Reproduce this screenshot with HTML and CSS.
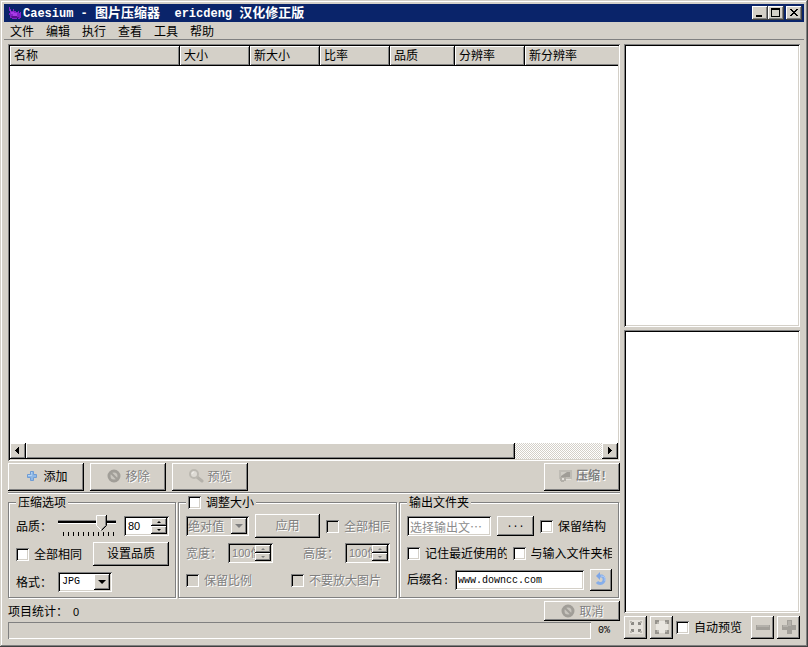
FILE: index.html
```html
<!DOCTYPE html>
<html lang="zh-CN">
<head>
<meta charset="utf-8">
<title>Caesium - 图片压缩器</title>
<link rel="stylesheet" href="styles.css">
</head>
<body>
<div class="window">
  <header class="titlebar">
    <svg class="logo" viewBox="0 0 14 14" aria-hidden="true"><path fill="#8420c8" d="M1 1h1v2h1v2h2V3h1v2h2v1h2V5h1v2h1V6h1v6h-1v1h-2v-1H9v1H4v-1H2V9H1V7h1V5H1z"/><path fill="#a63ce6" d="M2 4h1v2h3v1h3v3H5V8H3z"/><path fill="#5a1090" d="M3 10h6v1h2v1H4z"/></svg>
    <h1><span class="latin">Caesium - </span>图片压缩器<span class="latin">  ericdeng </span>汉化修正版</h1>
    <div class="caption-buttons">
      <button type="button" aria-label="最小化"><svg viewBox="0 0 16 14"><path d="M4 9h6v2H4z"/></svg></button>
      <button type="button" aria-label="最大化"><svg viewBox="0 0 16 14"><path fill-rule="evenodd" d="M3 2h9v9H3zM4 4v6h7V4z"/></svg></button>
      <button type="button" class="close" aria-label="关闭"><svg viewBox="0 0 16 14"><path d="M4 3h2v1h1v1h2V4h1V3h2v1h-1v1h-1v1H9v1h1v1h1v1h1v1h-2V9H9V8H7v1H6v1H4V9h1V8h1V7h1V6H6V5H5V4H4z"/></svg></button>
    </div>
  </header>

  <nav class="menubar">
    <button type="button">文件</button>
    <button type="button">编辑</button>
    <button type="button">执行</button>
    <button type="button">查看</button>
    <button type="button">工具</button>
    <button type="button">帮助</button>
  </nav>

  <main class="content">
    <section class="left">
      <div class="list sunken">
        <div class="list-view">
          <table>
            <colgroup><col class="c170"><col class="c70"><col class="c70"><col class="c70"><col class="c65"><col class="c70"><col></colgroup>
            <thead><tr><th>名称</th><th>大小</th><th>新大小</th><th>比率</th><th>品质</th><th>分辨率</th><th>新分辨率</th></tr></thead>
          </table>
        </div>
        <div class="scrollbar">
          <button type="button" class="raised" aria-label="向左滚动"><svg viewBox="0 0 16 16"><path d="M9 4v7H8v-1H7V9H6V8H5V7h1V6h1V5h1V4z"/></svg></button>
          <div class="scroll-thumb raised"></div>
          <div class="scroll-track"></div>
          <button type="button" class="raised" aria-label="向右滚动"><svg viewBox="0 0 16 16"><path d="M6 4v7h1v-1h1V9h1V8h1V7H9V6H8V5H7V4z"/></svg></button>
        </div>
      </div>

      <div class="actions">
        <button type="button" class="btn raised"><svg class="icon" viewBox="0 0 16 16"><path fill="#8fb8e6" stroke="#6f9cd4" d="M6.500 3.500h3v3h3v3h-3v3h-3v-3h-3v-3h3z"/><path fill="#b8d4f2" d="M7 4h1v3H4v1h4z"/></svg>添加</button>
        <button type="button" class="btn raised" disabled><svg class="icon" viewBox="0 0 16 16"><circle cx="8" cy="8" r="5" fill="#c8c5be" stroke="#a19e98" stroke-width="3"/><path stroke="#a19e98" stroke-width="2" d="M4 4l8 8"/></svg>移除</button>
        <button type="button" class="btn raised" disabled><svg class="icon" viewBox="0 0 16 16"><path stroke="#b4b1aa" stroke-width="3" stroke-linecap="round" d="M9 9l5 4"/><circle cx="6" cy="6" r="4" fill="#dedbd5" stroke="#bbb8b1" stroke-width="2"/><path stroke="#f2f0ec" fill="none" d="M4 6q0-2 2-2"/></svg>预览</button>
        <button type="button" class="btn raised compress" disabled><svg class="icon" viewBox="0 0 16 16"><path fill="#bfbcb5" d="M2 2h13v9H2z"/><path fill="#a09d97" d="M4 4h9v5H4z"/><path fill="#d0cdc6" d="M4 4h6L4 8z"/><path fill="#b2afa8" d="M3 9h6v4H7v1H4v-1H3z"/><path fill="#e4e1dc" d="M9 11h5v1H9zM5 10h2v2H5z"/></svg><span>压缩<span class="latin">!</span></span></button>
      </div>

      <hr>

      <form class="groups">
        <fieldset class="compression">
          <legend>压缩选项</legend>
          <div class="row">
            <label for="quality">品质<span class="colon">：</span></label>
            <div class="slider">
              <input type="range" id="quality" min="0" max="100" value="80">
              <div class="ticks"></div>
            </div>
            <div class="spin sunken push">
              <input type="text" value="80" aria-label="品质数值">
              <div class="steps"><button type="button" class="raised" aria-label="增加"><i class="up"></i></button><button type="button" class="raised" aria-label="减少"><i class="down"></i></button></div>
            </div>
          </div>
          <div class="row">
            <label class="check"><input type="checkbox"><span>全部相同</span></label>
            <button type="button" class="btn raised push">设置品质</button>
          </div>
          <div class="row">
            <label for="format">格式<span class="colon">：</span></label>
            <div class="combo sunken">
              <select id="format"><option>JPG</option><option>PNG</option><option>BMP</option></select>
              <span class="arrow raised"><i class="down"></i></span>
            </div>
          </div>
        </fieldset>

        <fieldset class="resize">
          <legend><label class="check"><input type="checkbox"><span>调整大小</span></label></legend>
          <div class="row">
            <div class="combo sunken off">
              <select disabled aria-label="调整方式"><option>绝对值</option></select>
              <span class="arrow raised"><i class="down"></i></span>
            </div>
            <button type="button" class="btn raised" disabled>应用</button>
            <label class="check off"><input type="checkbox" disabled><span>全部相同</span></label>
          </div>
          <div class="row split">
            <div class="field off">
              <label for="w">宽度<span class="colon">：</span></label>
              <div class="spin sunken">
                <input type="text" id="w" value="100像素" disabled>
                <div class="steps"><button type="button" class="raised" disabled aria-label="增加"><i class="up"></i></button><button type="button" class="raised" disabled aria-label="减少"><i class="down"></i></button></div>
              </div>
            </div>
            <div class="field off">
              <label for="h">高度<span class="colon">：</span></label>
              <div class="spin sunken">
                <input type="text" id="h" value="100像素" disabled>
                <div class="steps"><button type="button" class="raised" disabled aria-label="增加"><i class="up"></i></button><button type="button" class="raised" disabled aria-label="减少"><i class="down"></i></button></div>
              </div>
            </div>
          </div>
          <div class="row ratio">
            <label class="check off"><input type="checkbox" disabled><span>保留比例</span></label>
            <label class="check off"><input type="checkbox" disabled><span>不要放大图片</span></label>
          </div>
        </fieldset>

        <fieldset class="output">
          <legend>输出文件夹</legend>
          <div class="row">
            <input type="text" class="text sunken folder" placeholder="选择输出文…" aria-label="输出文件夹">
            <button type="button" class="btn raised browse">...</button>
            <label class="check"><input type="checkbox"><span>保留结构</span></label>
          </div>
          <div class="row halves">
            <label class="check"><input type="checkbox"><span>记住最近使用的文件夹</span></label>
            <label class="check"><input type="checkbox"><span>与输入文件夹相同</span></label>
          </div>
          <div class="row">
            <label for="suffix">后缀名<span class="latin">:</span></label>
            <input type="text" id="suffix" class="text sunken suffix" value="www.downcc.com">
            <button type="button" class="btn raised undo" aria-label="重置"><svg class="icon" viewBox="0 0 16 16"><path fill="none" stroke="#86aeea" stroke-width="3" d="M7 5h2a4 4 0 1 1-5 6"/><path fill="#7ea6e6" d="M7 1v8L3 5z"/><path stroke="#b4cdf5" fill="none" d="M8 5q5 0 4 5"/></svg></button>
          </div>
        </fieldset>
      </form>

      <div class="status">
        <span>项目统计<span class="colon">：</span><span class="digits count">0</span></span>
        <button type="button" class="btn raised" disabled><svg class="icon" viewBox="0 0 16 16"><circle cx="8" cy="8" r="5" fill="#c8c5be" stroke="#a19e98" stroke-width="3"/><path stroke="#a19e98" stroke-width="2" d="M4 4l8 8"/></svg>取消</button>
      </div>
      <div class="progress-row">
        <div class="progress" role="progressbar" aria-valuenow="0"></div>
        <span class="latin">0%</span>
      </div>
    </section>

    <aside class="right">
      <div class="preview sunken"></div>
      <div class="preview sunken"></div>
      <div class="tools">
        <button type="button" class="btn raised" disabled aria-label="适应窗口"><svg class="icon" viewBox="0 0 16 16"><path fill="#e6e3dd" d="M1 1h14v14H1z"/><path fill="#8b8984" d="M3 3h3v3H3zM10 3h3v3h-3zM3 10h3v3H3zM10 10h3v3h-3z"/><path fill="#b9b6af" d="M2 2h2v2H2zM12 2h2v2h-2zM2 12h2v2H2zM12 12h2v2h-2z"/></svg></button>
        <button type="button" class="btn raised" disabled aria-label="实际大小"><svg class="icon" viewBox="0 0 16 16"><path fill="#e9e6e0" d="M2 2h12v12H2z"/><path fill="#96938d" d="M1 1h4v2H3v2H1zM11 1h4v4h-2V3h-2zM1 11h2v2h2v2H1zM13 11h2v4h-4v-2h2z"/><path fill="#b9b6af" d="M3 3h2v2H3zM11 3h2v2h-2zM3 11h2v2H3zM11 11h2v2h-2z"/></svg></button>
        <label class="check"><input type="checkbox"><span>自动预览</span></label>
        <button type="button" class="btn raised push" disabled aria-label="缩小"><svg class="icon" viewBox="0 0 16 16"><path fill="#a3a09a" d="M1 6h14v5H1z"/><path fill="#b4b1ab" d="M2 6h12v2H2z"/></svg></button>
        <button type="button" class="btn raised" disabled aria-label="放大"><svg class="icon" viewBox="0 0 16 16"><path fill="#a3a09a" d="M6 1h5v5h4v5h-4v4H6v-4H1V6h5z"/><path fill="#b4b1ab" d="M7 2h3v5H7zM2 6h5v2H2z"/></svg></button>
      </div>
    </aside>
  </main>
</div>
</body>
</html>
```
FILE: styles.css
```css
:root {
  --face: #d4d0c8;
  --gray: #808080;
  --navy: #0a246a;
}

* { box-sizing: border-box; }

body {
  margin: 0;
  font: 12px/14px "Noto Sans CJK SC", "Liberation Sans", sans-serif;
  color: #000;
  background: var(--face);
}

button, input, select {
  margin: 0;
  padding: 0;
  border: 0;
  border-radius: 0;
  font: inherit;
  color: inherit;
  background: none;
  appearance: none;
  outline: none;
}

.latin {
  font-family: "Liberation Mono", monospace;
  font-size: 10px;
  white-space: pre;
}

.digits {
  font-family: "Liberation Sans", sans-serif;
  font-size: 11px;
}

/* The Traditional Chinese face centres the full-width colon */
.colon { font-family: "Noto Sans CJK TC", sans-serif; }

.raised {
  background: var(--face);
  box-shadow: inset -1px -1px #000, inset 1px 1px #fff, inset -2px -2px var(--gray);
}

.sunken {
  background: #fff;
  box-shadow: inset 1px 1px var(--gray), inset -1px -1px #fff, inset 2px 2px #000, inset -2px -2px var(--face);
}

.window {
  display: flex;
  flex-direction: column;
  min-height: 100vh;
  padding: 4px;
  background: var(--face);
  box-shadow: inset -1px -1px #404040, inset 1px 1px var(--face), inset -2px -2px var(--gray), inset 2px 2px #fff;
}

/* Title bar */
.titlebar {
  display: flex;
  align-items: center;
  height: 18px;
  padding: 0 2px 0 4px;
  background: var(--navy);
  color: #fff;
}

.logo { width: 14px; height: 14px; margin-right: 1px; }

h1 {
  flex: 1;
  margin: 0;
  font-size: 13px;
  line-height: 18px;
  font-weight: bold;
  white-space: nowrap;
}

h1 .latin { font-size: 12px; }

.caption-buttons { display: flex; }

.caption-buttons button {
  width: 16px;
  height: 14px;
  background: var(--face);
  box-shadow: inset -1px -1px #404040, inset 1px 1px #fff, inset -2px -2px var(--gray);
}

.caption-buttons .close { margin-left: 2px; }
.caption-buttons svg { display: block; width: 16px; height: 14px; }

/* Menu */
.menubar {
  display: flex;
  gap: 12px;
  height: 18px;
  padding: 0 6px;
  border-bottom: 1px solid var(--gray);
}

.content {
  flex: 1;
  display: grid;
  grid-template-columns: minmax(0, 1fr) 176px;
  gap: 4px;
  padding: 4px;
}

.left { display: flex; flex-direction: column; }

/* File list */
.list {
  flex: 1;
  display: flex;
  flex-direction: column;
  padding: 2px;
}

.list-view { flex: 1; overflow: hidden; }

table {
  width: 100%;
  table-layout: fixed;
  border-collapse: separate;
  border-spacing: 0;
}

.c170 { width: 170px; }
.c70 { width: 70px; }
.c65 { width: 65px; }

th {
  height: 20px;
  padding: 0 4px 2px;
  text-align: left;
  font-weight: normal;
  background: var(--face);
  box-shadow: inset -1px -1px #000, inset 1px 1px #fff, inset -2px -2px var(--gray);
}

th:last-child {
  box-shadow: inset 0 -1px #000, inset 1px 1px #fff, inset 0 -2px var(--gray);
}

.scrollbar { display: flex; height: 16px; }
.scrollbar button { width: 16px; }
.scrollbar svg { display: block; width: 16px; height: 16px; }
.scroll-thumb { flex: 489; }

.scroll-track {
  flex: 87;
  background: repeating-conic-gradient(#fff 0 25%, var(--face) 0 50%) 0 0 / 2px 2px;
}

/* Buttons */
.btn {
  display: inline-flex;
  align-items: center;
  justify-content: center;
  gap: 3px;
  width: 76px;
  height: 24px;
  padding-bottom: 2px;
  white-space: nowrap;
}

.icon { width: 16px; height: 16px; flex: none; }

.btn:disabled, .off {
  color: var(--gray);
  text-shadow: 1px 1px #fff;
}

.push { margin-left: auto; }

.actions { display: flex; gap: 6px; margin-top: 2px; }
.actions .btn { height: 28px; }

.compress { margin-left: auto; font-weight: bold; }
.compress .latin { font-size: 12px; }

hr {
  width: 100%;
  height: 2px;
  margin: 1px 0;
  border: 0;
  background: #fff;
  border-top: 1px solid var(--gray);
}

/* Option groups */
.groups {
  display: grid;
  grid-template-columns: 169fr 220fr 221fr;
  gap: 1px;
}

fieldset {
  min-width: 0;
  margin: 0 1px 1px 0;
  padding: 4px 6px 2px 7px;
  border: 1px solid var(--gray);
  box-shadow: 1px 1px #fff, inset 1px 1px #fff;
}

legend { padding: 0 2px; background: var(--face); }

.row {
  display: flex;
  align-items: center;
  height: 26px;
  white-space: nowrap;
}

.row + .row { margin-top: 1px; }
.compression .row + .row { margin-top: 2px; }

.check {
  display: flex;
  align-items: center;
  gap: 5px;
  min-width: 0;
}

.check span { overflow: hidden; white-space: nowrap; }

input[type="checkbox"] {
  flex: none;
  width: 13px;
  height: 13px;
  background: #fff;
  box-shadow: inset 1px 1px var(--gray), inset -1px -1px #fff, inset 2px 2px #000, inset -2px -2px var(--face);
}

input[type="checkbox"]:checked { background: #000; }
input[type="checkbox"]:disabled { background: var(--face); }

.slider { width: 58px; height: 22px; margin-left: 6px; }

.slider input {
  display: block;
  width: 100%;
  height: 16px;
}

.slider input::-webkit-slider-runnable-track {
  height: 16px;
  background: linear-gradient(var(--gray) 0 1px, #000 1px 3px, #fff 3px 4px) 0 5px / 100% 4px no-repeat;
}

.slider input::-webkit-slider-thumb {
  appearance: none;
  width: 11px;
  height: 16px;
  background: url("data:image/svg+xml,%3Csvg xmlns='http://www.w3.org/2000/svg' width='11' height='16'%3E%3Cpath fill='%23d4d0c8' d='M0 0h11v11l-5 5h-1L0 11z'/%3E%3Cpath fill='none' stroke='%23fff' d='M10 .5H.5v10l5 5'/%3E%3Cpath fill='none' stroke='%23808080' d='M9.500 1v9.500l-4 4'/%3E%3Cpath fill='none' stroke='%23000' d='M10.500 0v10.500l-5 5'/%3E%3C/svg%3E") no-repeat;
}

.ticks {
  width: 51px;
  height: 4px;
  margin: 1px 0 0 5px;
  background: repeating-linear-gradient(90deg, #000 0 1px, transparent 1px 5px);
}

.spin {
  display: flex;
  width: 45px;
  height: 20px;
  padding: 2px;
}

.spin input {
  flex: 1;
  min-width: 0;
  padding-left: 2px;
  font-family: "Liberation Sans", "Noto Sans CJK SC", sans-serif;
  font-size: 11px;
}

.steps { display: flex; flex-direction: column; width: 16px; }

.steps button {
  display: flex;
  align-items: center;
  justify-content: center;
  height: 8px;
}

.up, .down {
  width: 4px;
  height: 2px;
  background: #000;
  clip-path: polygon(50% 0, 100% 100%, 0 100%);
}

.down { clip-path: polygon(0 0, 100% 0, 50% 100%); }

.combo {
  position: relative;
  width: 54px;
  height: 20px;
  margin-left: 6px;
  padding: 2px;
}

.combo select {
  display: block;
  width: 100%;
  height: 16px;
  padding-left: 2px;
  font-family: "Liberation Mono", monospace;
  font-size: 10px;
}

.arrow {
  position: absolute;
  top: 2px;
  right: 2px;
  display: flex;
  align-items: center;
  justify-content: center;
  width: 16px;
  height: 16px;
  pointer-events: none;
}

.arrow .down { width: 8px; height: 4px; }

.off.sunken, .off .sunken { background: var(--face); }
.off .down, .off .up { background: var(--gray); }

input:disabled, select:disabled {
  color: var(--gray);
  opacity: 1;
  text-shadow: 1px 1px #fff;
}

.resize .combo { width: 63px; margin: 0; }
.resize .combo select { padding: 0; font: inherit; line-height: 16px; }
.resize .row .btn { width: 65px; margin: 0 6px; }
.resize .row:first-of-type .check { flex: 1; }
.split { justify-content: space-between; }
.field { display: flex; align-items: center; gap: 6px; }
.ratio { gap: 39px; }

.output .row { gap: 6px; }
.text { height: 20px; padding: 2px 3px; min-width: 0; }
.text::placeholder { color: #8c8c8c; opacity: 1; }
.folder { width: 84px; }
.output .browse { width: 37px; height: 20px; font: 10px/14px "Liberation Mono", monospace; }
.halves .check { flex: 1; }

.suffix {
  flex: 1;
  font-family: "Liberation Mono", monospace;
  font-size: 10px;
}

.output .undo { width: 22px; height: 22px; }

/* Status and progress */
.status {
  display: flex;
  align-items: center;
  justify-content: space-between;
  height: 20px;
  margin-top: 2px;
}

.status .btn { height: 20px; padding: 0; }
.count { margin-left: 5px; }

.progress-row {
  display: flex;
  align-items: center;
  gap: 7px;
  height: 17px;
  margin-top: 1px;
  padding-right: 10px;
}

.progress {
  flex: 1;
  height: 17px;
  box-shadow: inset 1px 1px var(--gray), inset -1px -1px #fff;
}

/* Preview column */
.right { display: flex; flex-direction: column; }
.preview { flex: 1; }
.preview + .preview { margin-top: 3px; }

.tools {
  display: flex;
  align-items: center;
  gap: 3px;
  height: 24px;
  margin-top: 2px;
}

.tools .btn { width: 23px; height: 23px; padding: 0; }
```
